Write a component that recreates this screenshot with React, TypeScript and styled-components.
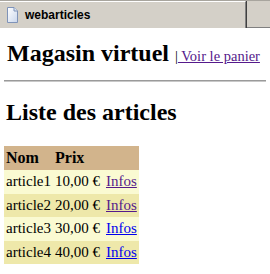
import React from "react";
import styled, { createGlobalStyle } from "styled-components";

const GlobalStyle = createGlobalStyle`
    html, body {
        margin: 0;
        padding: 0;
        background: #ffffff;
    }
    body {
        font-family: "Liberation Serif", "Times New Roman", serif;
        font-size: 16px;
        color: #000000;
    }
`;

const Window = styled.div`
    width: 270px;
    height: 274px;
    overflow: hidden;
    background: #ffffff;
`;

const TabBar = styled.div`
    display: flex;
    height: 28px;
    box-sizing: border-box;
    background: #d4d0c8;
    border-top: 1px solid #a8a59e;
`;

const Tab = styled.div`
    display: flex;
    align-items: center;
    gap: 7px;
    width: 246px;
    box-sizing: border-box;
    padding: 0 0 1px 7px;
    border-top: 1px solid #ffffff;
    border-right: 1px solid #808080;
    box-shadow: 1px 0 0 #404040;
    font-family: "Liberation Sans", Arial, sans-serif;
    font-weight: bold;
    font-size: 12px;
`;

const TabRest = styled.div`
    flex: 1;
    margin-left: 1px;
    border-bottom: 1px solid #808080;
`;

const Page = styled.div`
    padding: 0 4px;
`;

const TitleRow = styled.div`
    display: flex;
    align-items: baseline;
    white-space: nowrap;
    padding: 11px 0 0 3px;
`;

const Title = styled.h1`
    margin: 0;
    flex-shrink: 0;
    font-size: 24px;
    font-weight: bold;
    line-height: 28px;
`;

const Separator = styled.span`
    margin-left: 6px;
    flex-shrink: 0;
    font-size: 14.5px;
`;

const Link = styled.a<{ $visited?: boolean }>`
    color: ${(p) => (p.$visited ? "#551a8b" : "#0000ee")};
    text-decoration: underline;
    white-space: pre;
    cursor: pointer;
`;

const Rule = styled.hr`
    margin: 13px 0 0 0;
    height: 0;
    border: none;
    border-top: 1px solid #9a9a9a;
    border-bottom: 1px solid #c8c8c8;
`;

const SubTitle = styled.h2`
    margin: 16px 0 0 2px;
    font-size: 24px;
    font-weight: bold;
    line-height: 28px;
`;

const Table = styled.table`
    margin-top: 20px;
    border-collapse: collapse;
    border-spacing: 0;
    font-size: 15px;
`;

const HeadCell = styled.th<{ $w: number }>`
    width: ${(p) => p.$w}px;
    height: 24px;
    padding: 0 2px;
    text-align: left;
    font-weight: bold;
    font-size: 16px;
    background: #d2b48c;
`;

const Row = styled.tr<{ $odd: boolean }>`
    background: ${(p) => (p.$odd ? "#fafad2" : "#eee8aa")};
`;

const Cell = styled.td`
    height: 23.5px;
    padding: 0 2px;
    white-space: nowrap;
`;

const DocIcon = () => (
    <svg width="11" height="16" viewBox="0 0 11 16">
        <defs>
            <linearGradient id="docfill" x1="0" y1="0" x2="1" y2="1">
                <stop offset="0" stopColor="#ffffff" />
                <stop offset="1" stopColor="#c9d6ec" />
            </linearGradient>
        </defs>
        <path d="M0.5 0.5 H7 L10.5 4 V15.5 H0.5 Z" fill="url(#docfill)" stroke="#7f93b8" />
        <path d="M7 0.5 V4 H10.5" fill="#dde6f4" stroke="#7f93b8" />
    </svg>
);

const articles = [
    { name: "article1", price: "10,00 €", visited: true },
    { name: "article2", price: "20,00 €", visited: true },
    { name: "article3", price: "30,00 €", visited: false },
    { name: "article4", price: "40,00 €", visited: false },
];

export default function App() {
    return (
        <Window>
            <GlobalStyle />
            <TabBar>
                <Tab>
                    <DocIcon />
                    webarticles
                </Tab>
                <TabRest />
            </TabBar>
            <Page>
                <TitleRow>
                    <Title>Magasin virtuel</Title>
                    <Separator>
                        |<Link $visited>{" Voir le panier"}</Link>
                    </Separator>
                </TitleRow>
                <Rule />
                <SubTitle>Liste des articles</SubTitle>
                <Table>
                    <thead>
                        <tr>
                            <HeadCell $w={45}>Nom</HeadCell>
                            <HeadCell $w={47}>Prix</HeadCell>
                            <HeadCell $w={30}></HeadCell>
                        </tr>
                    </thead>
                    <tbody>
                        {articles.map((a, i) => (
                            <Row key={a.name} $odd={i % 2 === 0}>
                                <Cell>{a.name}</Cell>
                                <Cell>{a.price}</Cell>
                                <Cell>
                                    <Link $visited={a.visited}>Infos</Link>
                                </Cell>
                            </Row>
                        ))}
                    </tbody>
                </Table>
            </Page>
        </Window>
    );
}
